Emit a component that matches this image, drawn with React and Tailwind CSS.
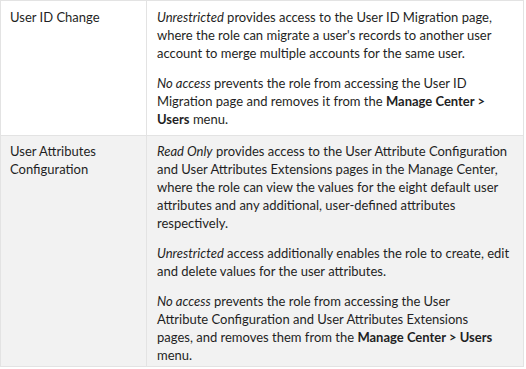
import * as React from 'react';

const rows = [
  {
    name: ['User ID Change'],
    bg: 'bg-white',
    pad: 'pt-[7px] pb-[7px]',
    paras: [
      <>
        <em>Unrestricted</em> provides access to the User ID Migration page,<br />
        where the role can migrate a user's records to another user<br />
        account to merge multiple accounts for the same user.
      </>,
      <>
        <em>No access</em> prevents the role from accessing the User ID<br />
        Migration page and removes it from the <b>Manage Center &gt;</b><br />
        <b>Users</b> menu.
      </>,
    ],
  },
  {
    name: ['User Attributes', 'Configuration'],
    bg: 'bg-[#f2f2f2]',
    pad: 'pt-[6px] pb-[2px]',
    paras: [
      <>
        <em>Read Only</em> provides access to the User Attribute Configuration<br />
        and User Attributes Extensions pages in the Manage Center,<br />
        where the role can view the values for the eight default user<br />
        attributes and any additional, user-defined attributes<br />
        respectively.
      </>,
      <>
        <em>Unrestricted</em> access additionally enables the role to create, edit<br />
        and delete values for the user attributes.
      </>,
      <>
        <em>No access</em> prevents the role from accessing the User<br />
        Attribute Configuration and User Attributes Extensions<br />
        pages, and removes them from the <b>Manage Center &gt; Users</b><br />
        menu.
      </>,
    ],
  },
];

export default function App() {
  return (
    <div className="w-[526px] h-[369px] bg-white font-['Lato',sans-serif] text-[13px] leading-[18px] text-[#1f1f24]">
      <div className="w-[524px] border border-[#e3e3e3]">
        {rows.map((row, i) => (
          <div key={i} className={`flex ${row.bg} ${i > 0 ? 'border-t border-[#e3e3e3]' : ''}`}>
            <div className={`w-[146px] shrink-0 border-r border-[#e3e3e3] px-[9px] ${row.pad}`}>
              {row.name.map((n) => (
                <div key={n}>{n}</div>
              ))}
            </div>
            <div className={`flex-1 pl-[10px] pr-[2px] ${row.pad} flex flex-col gap-[12px] whitespace-nowrap`}>
              {row.paras.map((p, j) => (
                <p key={j}>{p}</p>
              ))}
            </div>
          </div>
        ))}
      </div>
    </div>
  );
}
